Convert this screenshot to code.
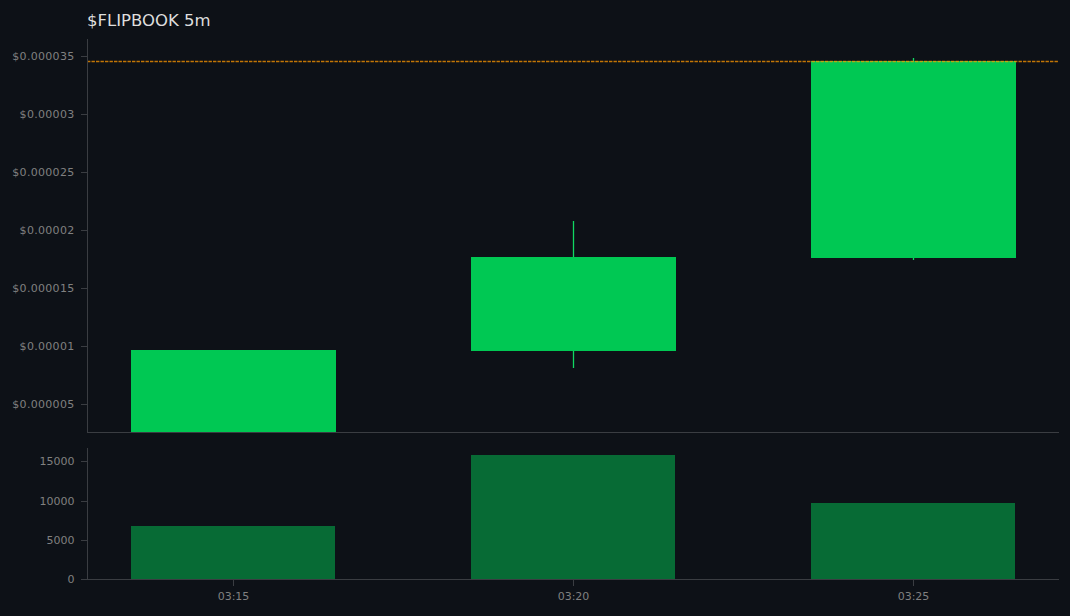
import React from "react";

const AXIS = "#3a3d42";
const LABEL = "#808080";
const GREEN = "#00c853";
const VOL_GREEN = "#076b35";

const priceTicks = [
  { y: 56.5, label: "$0.000035" },
  { y: 114.5, label: "$0.00003" },
  { y: 172.5, label: "$0.000025" },
  { y: 230.5, label: "$0.00002" },
  { y: 288.5, label: "$0.000015" },
  { y: 346.5, label: "$0.00001" },
  { y: 404.5, label: "$0.000005" },
];

const volumeTicks = [
  { y: 461.5, label: "15000" },
  { y: 501.5, label: "10000" },
  { y: 540.5, label: "5000" },
  { y: 579.5, label: "0" },
];

const candles = [
  { x: 131, top: 350, bottom: 432 },
  { x: 471, top: 257, bottom: 351, wickTop: 221, wickBottom: 368 },
  { x: 811, top: 61, bottom: 258, wickTop: 58, wickBottom: 260 },
];

const volumes = [
  { x: 131, top: 526, time: "03:15" },
  { x: 471, top: 455, time: "03:20" },
  { x: 811, top: 503, time: "03:25" },
];

const YTicks = ({ ticks, spacing }) =>
  ticks.map((t) => (
    <g key={t.label}>
      <line x1="81" x2="87" y1={t.y} y2={t.y} stroke={AXIS} />
      <text x="74.5" y={t.y + 3.5} textAnchor="end" fontSize="11" letterSpacing={spacing} fill={LABEL}>
        {t.label}
      </text>
    </g>
  ));

const App = () => {
  return (
    <div className="w-[1070px] h-[616px] overflow-hidden bg-[#0d1117] font-['DejaVu_Sans',sans-serif]">
      <div className="h-[36px] pl-[87px] pt-[12px] text-[16.5px] leading-[18px] text-[#dedede]">
        $FLIPBOOK 5m
      </div>

      {/* Price pane */}
      <svg width="1070" height="404" viewBox="0 36 1070 404" className="block">
        <YTicks ticks={priceTicks} spacing="0.3" />
        {candles.map((c) => (
          <g key={c.x}>
            {c.wickTop && (
              <line x1={c.x + 102.5} x2={c.x + 102.5} y1={c.wickTop} y2={c.wickBottom} stroke="#10d862" strokeWidth="1.3" />
            )}
            <rect x={c.x} y={c.top} width="205" height={c.bottom - c.top} fill={GREEN} />
          </g>
        ))}
        <line x1="87" x2="1059" y1="61.5" y2="61.5" stroke="#ff9800" strokeWidth="1.5" strokeDasharray="3.4 1.1" opacity="0.75" />
        <line x1="87.5" x2="87.5" y1="39" y2="432" stroke={AXIS} />
        <line x1="87" x2="1059" y1="432.5" y2="432.5" stroke={AXIS} />
      </svg>

      {/* Volume pane */}
      <svg width="1070" height="176" viewBox="0 440 1070 176" className="block">
        <YTicks ticks={volumeTicks} />
        {volumes.map((v) => (
          <g key={v.x}>
            <rect x={v.x} y={v.top} width="204" height={579 - v.top} fill={VOL_GREEN} />
            <line x1={v.x + 102.5} x2={v.x + 102.5} y1="580" y2="586" stroke={AXIS} />
            <text x={v.x + 102.5} y="600" textAnchor="middle" fontSize="11" fill={LABEL}>
              {v.time}
            </text>
          </g>
        ))}
        <line x1="87.5" x2="87.5" y1="448" y2="579" stroke={AXIS} />
        <line x1="87" x2="1059" y1="579.5" y2="579.5" stroke={AXIS} />
      </svg>
    </div>
  );
};

export default App;
